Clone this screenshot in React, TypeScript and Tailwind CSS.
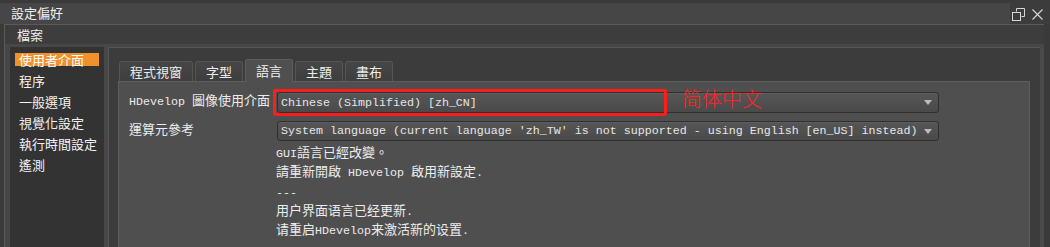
import React from "react";

const CJK = /([\u2e80-\u9fff\u3000-\u303f\uff00-\uffef]+)/;

function Mix({ text, sc }: { text: string; sc?: boolean }) {
  const parts = text.split(CJK);
  return (
    <>
      {parts.map((p, i) =>
        p && CJK.test(p) ? (
          <span
            key={i}
            className={
              sc
                ? "text-[13px] leading-[14px] [font-family:'Noto_Sans_CJK_SC',sans-serif]"
                : "text-[13px] leading-[14px] [font-family:'Noto_Sans_CJK_TC',sans-serif]"
            }
          >
            {p}
          </span>
        ) : (
          <span key={i}>{p}</span>
        )
      )}
    </>
  );
}

function Arrow() {
  return (
    <svg width="8" height="5" viewBox="0 0 8 5">
      <path d="M0 0 L8 0 L4 5 Z" fill="#bdbdbd" />
    </svg>
  );
}

function Combo({ text, h }: { text: string; h: string }) {
  return (
    <div
      className={`${h} w-[662px] flex items-center justify-between pl-[3px] pr-[6px] rounded-[3px] border border-[#2f2f2f] bg-gradient-to-b from-[#565656] to-[#4a4a4a] shadow-[inset_0_1px_0_#5e5e5e] text-[#e6e6e6] whitespace-pre`}
    >
      <span className="leading-[18px]">{text}</span>
      <Arrow />
    </div>
  );
}

const sideItems = ["使用者介面", "程序", "一般選項", "視覺化設定", "執行時間設定", "遙測"];
const tabs = [
  { t: "程式視窗", w: "w-[74px]" },
  { t: "字型", w: "w-[48px]" },
  { t: "語言", w: "w-[48px]", active: true },
  { t: "主題", w: "w-[48px]" },
  { t: "畫布", w: "w-[48px]" },
];

const lines: { t: string; sc?: boolean }[] = [
  { t: "GUI語言已經改變。" },
  { t: "請重新開啟 HDevelop 啟用新設定." },
  { t: "---" },
  { t: "用户界面语言已经更新.", sc: true },
  { t: "请重启HDevelop来激活新的设置.", sc: true },
];

export default function App() {
  return (
    <div className="w-[1050px] h-[247px] overflow-hidden bg-[#3a3a3a] flex flex-col text-[#efefef] [font-family:'Noto_Sans_CJK_TC',sans-serif] text-[13px]">
      {/* title bar */}
      <div className="h-[24px] flex shrink-0">
        <div className="flex-1 mt-[3px] h-[21px] bg-[#464646] flex items-center pl-[11px] pb-[2px] leading-[16px]">
          設定偏好
        </div>
        <div className="w-[40px] bg-[#3c3c3c] flex items-start pt-[8px] pl-[2px] gap-[7px]">
          <svg width="13" height="13" viewBox="0 0 13 13" fill="none" stroke="#d8d8d8" strokeWidth="1">
            <path d="M4.5 3.5 V0.5 H12.5 V8.5 H9.5" />
            <rect x="0.5" y="4.5" width="8" height="8" />
          </svg>
          <svg width="11" height="11" viewBox="0 0 11 11" stroke="#d8d8d8" strokeWidth="1.1" className="mt-[1px]">
            <path d="M0.5 0.5 L10.5 10.5 M10.5 0.5 L0.5 10.5" />
          </svg>
        </div>
      </div>

      {/* menu bar */}
      <div className="h-[20px] shrink-0 ml-[4px] mr-[6px] bg-[#3d3d3d] border-t border-l border-[#5a5a5a] flex items-center pl-[12px] leading-[16px]">
        檔案
      </div>

      {/* body */}
      <div className="flex-1 ml-[4px] mr-[6px] border-l border-[#5a5a5a] bg-[#474747] pt-[3px] pl-[5px] flex min-h-0">
        {/* sidebar */}
        <div className="w-[94px] bg-[#333333] pt-[2px] flex flex-col shrink-0">
          {sideItems.map((s, i) => (
            <div key={s} className="h-[21px] flex items-center px-[5px]">
              <span
                className={
                  i === 0
                    ? "w-full h-[13px] bg-[#f0912b] text-white pl-[4px] leading-[13px]"
                    : "pl-[4px] leading-[15px] text-[#f2f2f2]"
                }
              >
                {s}
              </span>
            </div>
          ))}
        </div>

        <div className="w-[4px] shrink-0 bg-[#484848]" />

        {/* group */}
        <div className="w-[932px] shrink-0 bg-[#3c3c3c] border-t border-l border-[#555555] pl-[9px] pt-[11px] flex flex-col">
          {/* tab row */}
          <div className="h-[22px] flex items-end gap-[2px] pl-[1px] shrink-0">
            {tabs.map((t) =>
              t.active ? (
                <div
                  key={t.t}
                  className={`${t.w} h-[23px] -mb-px relative z-10 rounded-t-[3px] border border-b-0 border-[#5e5e5e] bg-[#4f4f4f] flex items-center justify-center text-[#f0f0f0]`}
                >
                  {t.t}
                </div>
              ) : (
                <div
                  key={t.t}
                  className={`${t.w} h-[20px] rounded-t-[3px] border border-b-0 border-[#555555] bg-gradient-to-b from-[#464646] to-[#3e3e3e] flex items-center justify-center text-[#ececec]`}
                >
                  {t.t}
                </div>
              )
            )}
          </div>

          {/* tab panel */}
          <div className="relative w-[912px] flex-1 bg-[#4f4f4f] border-t border-l border-r border-[#5e5e5e] pl-[10px] pt-[10px] [font-family:'Liberation_Mono','Noto_Sans_CJK_TC',monospace] text-[11.67px]">
            <div className="flex items-center h-[21px]">
              <div className="w-[148px] shrink-0 text-[#ececec] whitespace-pre">
                <Mix text="HDevelop 圖像使用介面" />
              </div>
              <Combo text="Chinese (Simplified) [zh_CN]" h="h-[21px]" />
            </div>
            <div className="flex items-center h-[20px] mt-[8px]">
              <div className="w-[148px] shrink-0 text-[#ececec]">
                <Mix text="運算元參考" />
              </div>
              <Combo
                text="System language (current language 'zh_TW' is not supported - using English [en_US] instead)"
                h="h-[20px]"
              />
            </div>
            <div className="ml-[147px] mt-[4px] text-[#ececec] whitespace-pre flex flex-col">
              {lines.map((l, i) => (
                <div key={i} className="h-[19.25px] leading-[19px] overflow-visible">
                  <Mix text={l.t} sc={l.sc} />
                </div>
              ))}
            </div>

            {/* annotation overlays */}
            <div className="absolute left-[154px] top-[7px] w-[394px] h-[27px] border-[3px] border-[#ff1c1c] rounded-[3px]" />
            <div className="absolute left-[563px] top-[5px] text-[20px] leading-[24px] text-[#ff2424] [font-family:'Noto_Sans_CJK_SC',sans-serif] font-light">
              简体中文
            </div>
          </div>
        </div>
        <div className="w-[4px] shrink-0 bg-[#4a4a4a]" />
      </div>
    </div>
  );
}
